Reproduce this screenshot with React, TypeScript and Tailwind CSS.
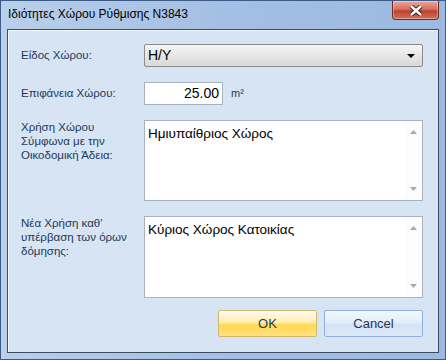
import React from 'react';

const font = { fontFamily: '"Liberation Sans", Arial, sans-serif' };

const ScrollArrows: React.FC = () => (
  <div className="flex w-[17px] flex-col items-center justify-between bg-[#fbfcfd] py-[9px]">
    <svg width="7" height="4" viewBox="0 0 7 4">
      <path d="M0 4 L3.5 0 L7 4 Z" fill="#a7acb2" />
    </svg>
    <svg width="7" height="4" viewBox="0 0 7 4">
      <path d="M0 0 L7 0 L3.5 4 Z" fill="#a7acb2" />
    </svg>
  </div>
);

const TextBox: React.FC<{ text: string; height: string }> = ({ text, height }) => (
  <div className={`flex w-[279px] border border-[#a9b3bf] bg-white ${height}`}>
    <div className="flex-1 pl-[3px] pt-[4px] text-[13.5px] leading-[17px] text-black">{text}</div>
    <ScrollArrows />
  </div>
);

export default function App() {
  return (
    <div
      className="flex h-[360px] w-[446px] flex-col border border-[#3a5a87] bg-gradient-to-r from-[#b9cfea] via-[#a3bfe3] to-[#9cb9df]"
      style={font}
    >
      {/* title bar */}
      <div className="flex h-[28px] items-start">
        <div className="pl-[7px] pt-[5px] text-[12px] leading-[16px] text-black">Ιδιότητες Χώρου Ρύθμισης N3843</div>
        <button className="ml-auto mr-[6px] flex h-[19px] w-[47px] items-center justify-center rounded-b-[4px] border border-t-0 border-[#6b2c25] bg-[linear-gradient(to_bottom,#e9a99c_0%,#d7715f_45%,#c0402f_55%,#d4705a_100%)] shadow-[inset_0_0_0_1px_rgba(255,255,255,0.35)]">
          <svg width="14" height="11" viewBox="0 0 14 11">
            <path d="M2 1 L12 10 M12 1 L2 10" stroke="#3a1410" strokeWidth="4.4" fill="none" />
            <path d="M2 1 L12 10 M12 1 L2 10" stroke="#ffffff" strokeWidth="2.6" fill="none" />
          </svg>
        </button>
      </div>

      {/* client panel */}
      <div className="mx-[6px] flex h-[324px] flex-col border border-[#3c4b60] bg-[#d6e4f3] pl-[13px] pt-[14px] shadow-[inset_1px_1px_0_#f2f7fc]">
        <div className="flex h-[23px] items-center">
          <div className="w-[123px] text-[11.5px] text-[#1e395b]">Είδος Χώρου:</div>
          <div className="flex h-[23px] w-[279px] items-center rounded-[2px] border border-[#8c8c8c] bg-[linear-gradient(to_bottom,#f6f6f6,#e6e6e6_50%,#d9d9d9)] pl-[3px] pr-[7px]">
            <span className="flex-1 text-[14px] text-black">H/Y</span>
            <svg width="8" height="4" viewBox="0 0 8 4">
              <path d="M0 0 L8 0 L4 4 Z" fill="#000" />
            </svg>
          </div>
        </div>

        <div className="mt-[15px] flex h-[23px] items-center">
          <div className="w-[123px] text-[11.5px] text-[#1e395b]">Επιφάνεια Χώρου:</div>
          <div className="flex h-[23px] w-[79px] items-center justify-end border border-[#a9b3bf] bg-white pr-[3px] text-[14px] text-black">
            25.00
          </div>
          <span className="ml-[8px] text-[11px] text-[#1e395b]">m²</span>
        </div>

        <div className="mt-[15px] flex">
          <div className="w-[123px] text-[11.5px] leading-[14px] text-[#1e395b]">
            Χρήση Χώρου
            <br />
            Σύμφωνα με την
            <br />
            Οικοδομική Άδεια:
          </div>
          <TextBox text="Ημιυπαίθριος Χώρος" height="h-[81px]" />
        </div>

        <div className="mt-[15px] flex">
          <div className="w-[123px] text-[11.5px] leading-[14px] text-[#1e395b]">
            Νέα Χρήση καθ'
            <br />
            υπέρβαση των όρων
            <br />
            δόμησης:
          </div>
          <TextBox text="Κύριος Χώρος Κατοικίας" height="h-[82px]" />
        </div>

        <div className="mt-[12px] flex w-[402px] justify-end gap-[7px]">
          <button className="h-[27px] w-[99px] rounded-[2px] border border-[#d2b86c] bg-[linear-gradient(to_bottom,#fffcef_0%,#ffeeb0_45%,#ffd84f_55%,#ffe37e_100%)] text-[13px] text-[#1e395b]">
            OK
          </button>
          <button className="h-[27px] w-[99px] rounded-[2px] border border-[#8eb0de] bg-[linear-gradient(to_bottom,#f4f8fd_0%,#e4edf9_45%,#d3e2f5_55%,#dde9f8_100%)] text-[13px] text-[#1e395b]">
            Cancel
          </button>
        </div>
      </div>
    </div>
  );
}
